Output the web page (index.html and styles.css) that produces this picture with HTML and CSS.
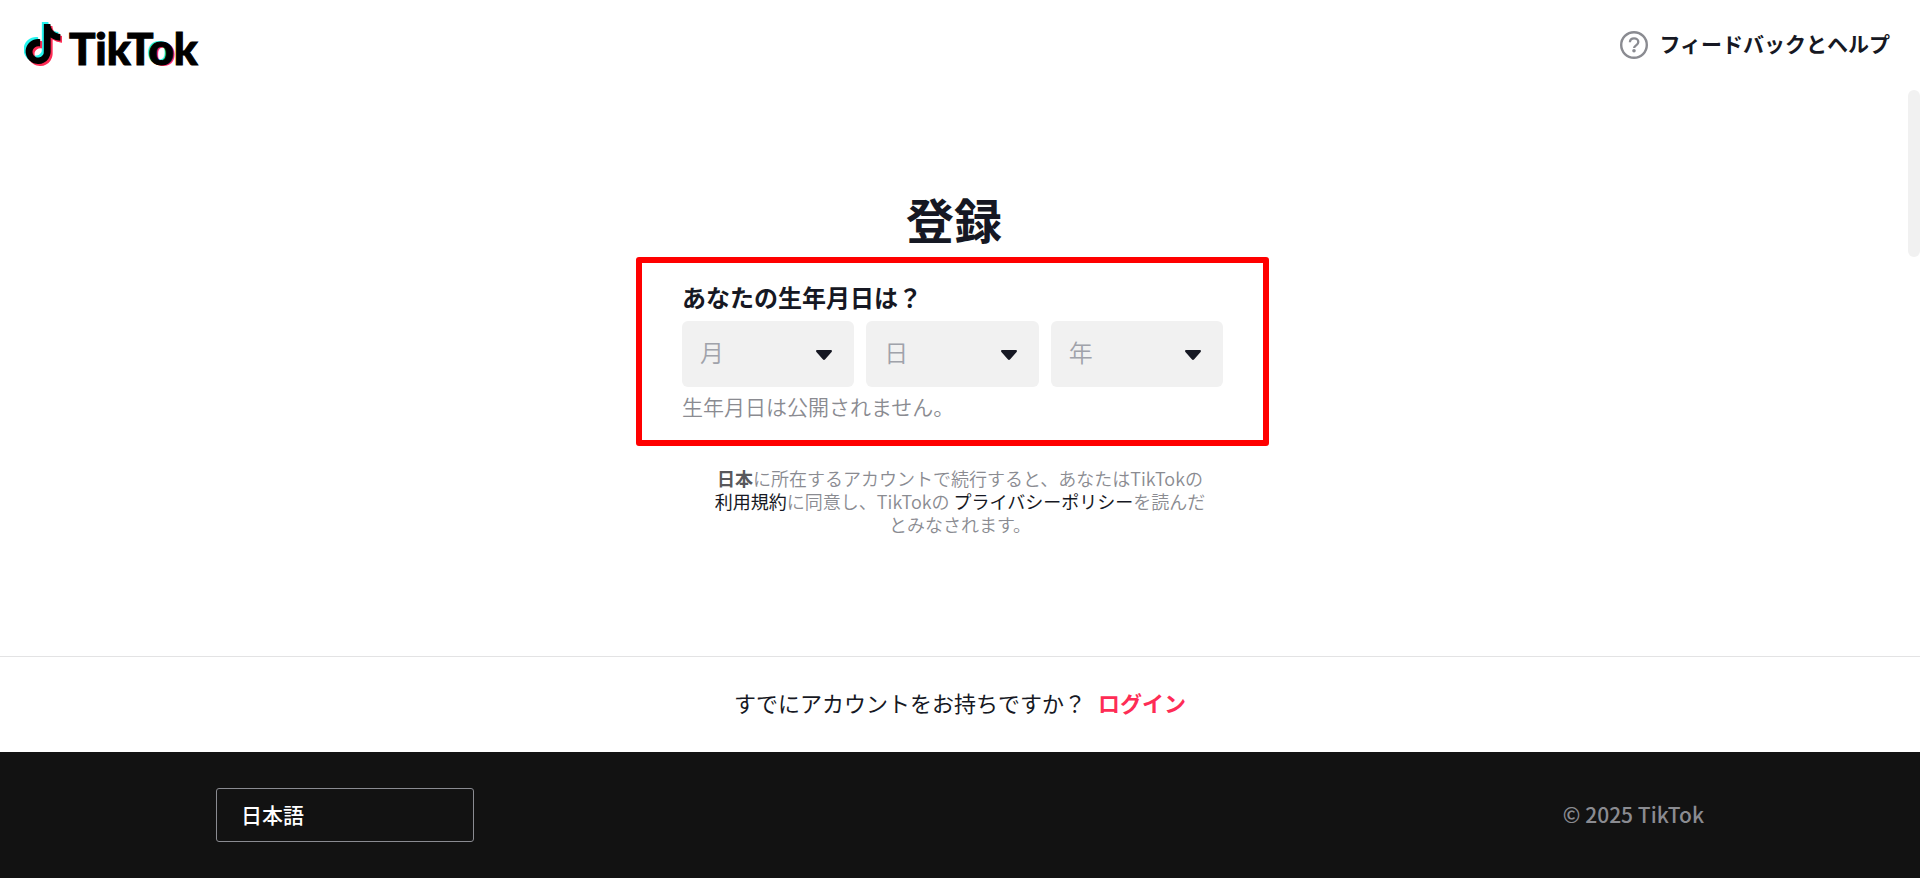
FILE: index.html
```html
<!DOCTYPE html>
<html lang="ja">
<head>
<meta charset="utf-8">
<meta name="viewport" content="width=device-width, initial-scale=1">
<title>登録 | TikTok</title>
<link rel="stylesheet" href="styles.css">
</head>
<body>
<svg class="defs" aria-hidden="true">
  <symbol id="note" viewBox="0 0 24 24" overflow="visible">
    <path d="M12.525.02c1.31-.02 2.61-.01 3.91-.02.08 1.53.63 3.09 1.75 4.17 1.12 1.11 2.7 1.62 4.24 1.79v4.03c-1.44-.05-2.89-.35-4.2-.97-.57-.26-1.1-.59-1.62-.93-.01 2.92.01 5.84-.02 8.75-.08 1.4-.54 2.79-1.35 3.94-1.31 1.92-3.58 3.17-5.91 3.21-1.43.08-2.86-.31-4.08-1.03-2.02-1.19-3.44-3.37-3.65-5.71-.02-.5-.03-1-.01-1.49.18-1.9 1.12-3.72 2.58-4.96 1.66-1.44 3.98-2.13 6.15-1.72.02 1.48-.04 2.96-.04 4.44-.99-.32-2.15-.23-3.02.37-.63.41-1.11 1.04-1.36 1.75-.21.51-.15 1.07-.14 1.61.24 1.64 1.82 3.02 3.5 2.87 1.12-.01 2.19-.66 2.77-1.61.19-.33.4-.67.41-1.06.1-1.79.06-3.57.07-5.36.01-4.03-.01-8.05.02-12.07z"/>
  </symbol>
  <symbol id="caret" viewBox="0 0 16 10">
    <path d="M1.2 0h13.6c1.1 0 1.5 1.1.8 1.9L9.2 9.3c-.7.8-1.7.8-2.4 0L.4 1.9C-.3 1.1.1 0 1.2 0z"/>
  </symbol>
</svg>
<header class="header">
  <a class="logo" href="#" aria-label="TikTok">
    <svg class="logo-note" viewBox="0 0 38 44" aria-hidden="true">
      <use href="#note" x="-3" y="0" width="40" height="40" fill="#25f4ee"/>
      <use href="#note" x="1" y="4" width="40" height="40" fill="#fe2c55"/>
      <use href="#note" x="-1" y="2" width="40" height="40" fill="#000"/>
    </svg>
    <span class="logo-text">TikT<span class="logo-o">o</span>k</span>
  </a>
  <a class="help" href="#">
    <svg class="help-icon" viewBox="0 0 28 28" fill="none" stroke="currentColor" aria-hidden="true">
      <circle cx="14" cy="14" r="12.8" stroke-width="2.4"/>
      <path d="M9.9 11.3c.1-2.4 1.8-3.9 4.2-3.9s4.2 1.5 4.2 3.6c0 1.7-1 2.5-2.1 3.3-1.3.9-2.1 1.4-2.1 2.8" stroke-width="2.3"/>
      <circle cx="14" cy="19.8" r="1.8" fill="currentColor" stroke="none"/>
    </svg>
    <span class="help-text">フィードバックとヘルプ</span>
  </a>
</header>
<main class="main">
  <h1 class="title">登録</h1>
  <form class="birthday">
    <p class="question" id="question">あなたの生年月日は？</p>
    <div class="selects" role="group" aria-labelledby="question">
      <div class="field"><select class="select" aria-label="月"><option>月</option></select><svg class="caret" aria-hidden="true"><use href="#caret"/></svg></div>
      <div class="field"><select class="select" aria-label="日"><option>日</option></select><svg class="caret" aria-hidden="true"><use href="#caret"/></svg></div>
      <div class="field"><select class="select" aria-label="年"><option>年</option></select><svg class="caret" aria-hidden="true"><use href="#caret"/></svg></div>
    </div>
    <p class="hint">生年月日は公開されません。</p>
  </form>
  <p class="terms"><strong>日本</strong>に所在するアカウントで続行すると、あなたはTikTokの<br><a href="#">利用規約</a>に同意し、TikTokの <a href="#">プライバシーポリシー</a>を読んだ<br>とみなされます。</p>
  <div class="scroll-thumb"></div>
</main>
<div class="login">
  <span>すでにアカウントをお持ちですか？</span>
  <a href="#">ログイン</a>
</div>
<footer class="footer">
  <select class="language" aria-label="言語"><option>日本語</option></select>
  <span class="copyright">© 2025 TikTok</span>
</footer>
</body>
</html>
```
FILE: styles.css
```css
* { box-sizing: border-box; }

body {
  margin: 0;
  min-height: 100vh;
  display: flex;
  flex-direction: column;
  background: #fff;
  color: #161823;
  font-family: "Noto Sans CJK JP", sans-serif;
}

a { color: inherit; text-decoration: none; }
h1, p { margin: 0; }
.defs { position: absolute; width: 0; height: 0; }

.header {
  height: 90px;
  padding: 0 30px 0 24px;
  display: flex;
  align-items: center;
  justify-content: space-between;
}

.logo { display: flex; align-items: center; gap: 7px; padding-bottom: 2px; color: #000; }
.logo-note { width: 38px; height: 44px; }
.logo-text {
  font-family: Lato, sans-serif;
  font-weight: 900;
  font-size: 44px;
  line-height: 52px;
  padding-top: 8px;
  -webkit-text-stroke: 1px #000;
}
.logo-o { text-shadow: -2px -1px #25f4ee, 2px 1px #fe2c55; }

.help {
  display: flex;
  align-items: center;
  gap: 11px;
  font-size: 21px;
  line-height: 30px;
  font-weight: 700;
}
.help-icon { width: 28px; height: 28px; color: #8a8b91; }
.help-text { padding-bottom: 4px; }

.main {
  position: relative;
  flex: 1;
  padding: 98px 15px 60px 0;
  display: flex;
  flex-direction: column;
  align-items: center;
}
.title { padding-left: 3px; font-size: 48px; line-height: 60px; font-weight: 700; }

.birthday {
  width: 100%;
  max-width: 633px;
  margin-top: 9px;
  padding: 20px 40px 19px;
  border: 6px solid #f00;
  border-radius: 3px;
}
.question { font-size: 24px; line-height: 28px; font-weight: 700; }
.selects {
  display: grid;
  grid-template-columns: repeat(3, 1fr);
  gap: 12px;
  margin-top: 10px;
}
.field { position: relative; }
.select {
  display: block;
  width: 100%;
  height: 66px;
  padding: 0 48px 4px 18px;
  border: 0;
  border-radius: 6px;
  appearance: none;
  background: #f1f1f1;
  color: #a0a2aa;
  font: 350 24px/36px "Noto Sans CJK JP", sans-serif;
}
.caret {
  position: absolute;
  right: 22px;
  top: 29px;
  width: 16px;
  height: 10px;
  fill: #161823;
  pointer-events: none;
}
.hint { margin-top: 4px; font-size: 21px; line-height: 30px; font-weight: 350; color: #8a8b91; }

.terms {
  margin-top: 21px;
  padding-left: 15px;
  font-size: 18px;
  line-height: 23px;
  font-weight: 350;
  text-align: center;
  color: #8a8b91;
}
.terms strong { font-weight: 700; color: #58585c; }
.terms a { font-weight: 400; color: #161823; }

.scroll-thumb {
  position: absolute;
  top: 0;
  right: 0;
  width: 12px;
  height: 167px;
  border-radius: 6px;
  background: #f1f1f1;
}

.login {
  height: 96px;
  padding-bottom: 6px;
  border-top: 1px solid #e3e3e4;
  display: flex;
  align-items: center;
  justify-content: center;
  gap: 12px;
  font-size: 22px;
  line-height: 30px;
}
.login a { font-weight: 700; color: #fe2c55; }

.footer {
  height: 126px;
  padding: 0 216px;
  display: flex;
  align-items: center;
  justify-content: space-between;
  background: #121212;
}
.language {
  width: 258px;
  height: 54px;
  padding: 0 24px 2px;
  border: 1px solid #8a8b91;
  border-radius: 3px;
  appearance: none;
  background: transparent;
  color: #fff;
  font: 500 21px/30px "Noto Sans CJK JP", sans-serif;
}
.copyright { padding-bottom: 2px; font-size: 21px; line-height: 30px; font-weight: 500; color: #8a8b91; }
```
